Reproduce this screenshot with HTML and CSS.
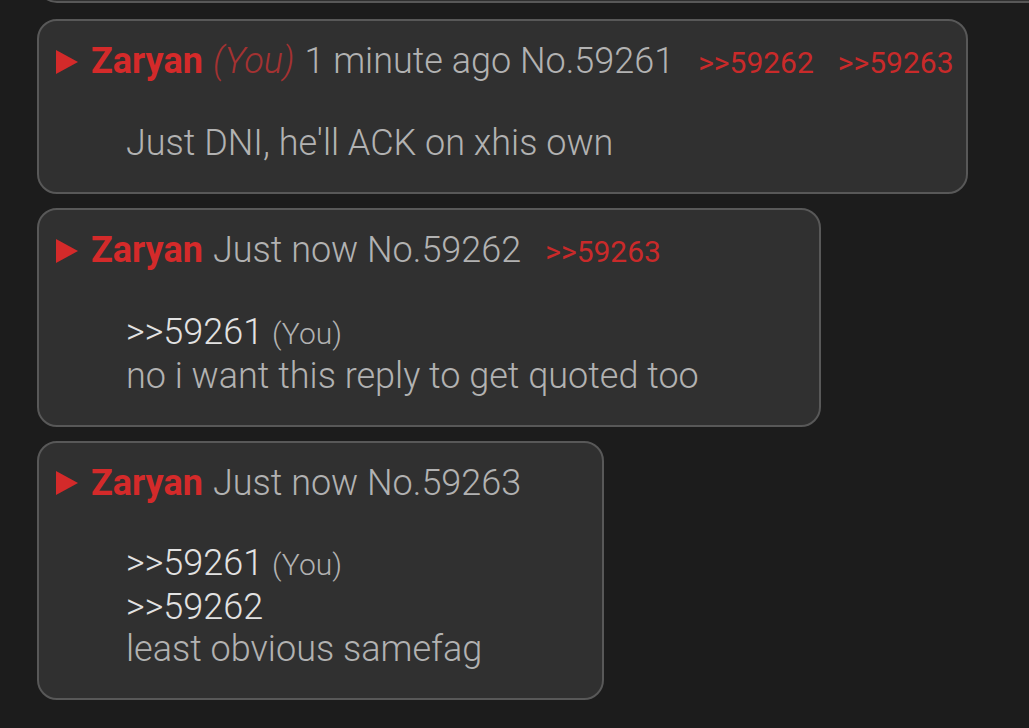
FILE: index.html
```html
<!DOCTYPE html>
<html lang="en">
<head>
    <meta charset="UTF-8">
    <meta name="viewport" content="width=device-width, initial-scale=1.0">
    <title>Thread</title>
    <link rel="stylesheet" href="styles.css">
</head>
<body>
    <div class="thread">
        <div class="post post-prev"></div>

        <div class="post">
            <div class="post-head">
                <svg class="arrow" width="22" height="24" viewBox="0 0 22 24"><polygon points="0,0 22,12 0,24" fill="#d42a2a"/></svg>
                <span class="name">Zaryan</span>
                <span class="you">(You)</span>
                <span class="meta">1 minute ago No.59261</span>
                <span class="backlinks">
                    <a class="backlink">&gt;&gt;59262</a>
                    <a class="backlink">&gt;&gt;59263</a>
                </span>
            </div>
            <div class="post-body">
                <div class="line">Just DNI, he'll ACK on xhis own</div>
            </div>
        </div>

        <div class="post">
            <div class="post-head">
                <svg class="arrow" width="22" height="24" viewBox="0 0 22 24"><polygon points="0,0 22,12 0,24" fill="#d42a2a"/></svg>
                <span class="name">Zaryan</span>
                <span class="meta">Just now No.59262</span>
                <span class="backlinks">
                    <a class="backlink">&gt;&gt;59263</a>
                </span>
            </div>
            <div class="post-body">
                <div class="line"><span class="quote">&gt;&gt;59261</span> <span class="quote-you">(You)</span></div>
                <div class="line">no i want this reply to get quoted too</div>
            </div>
        </div>

        <div class="post">
            <div class="post-head">
                <svg class="arrow" width="22" height="24" viewBox="0 0 22 24"><polygon points="0,0 22,12 0,24" fill="#d42a2a"/></svg>
                <span class="name">Zaryan</span>
                <span class="meta">Just now No.59263</span>
            </div>
            <div class="post-body">
                <div class="line"><span class="quote">&gt;&gt;59261</span> <span class="quote-you">(You)</span></div>
                <div class="line"><span class="quote">&gt;&gt;59262</span></div>
                <div class="line">least obvious samefag</div>
            </div>
        </div>
    </div>
</body>
</html>
```

FILE: styles.css
```css
body {
    margin: 0;
    background: #1c1c1c;
    font-family: Roboto, "Noto Sans", sans-serif;
    font-weight: 300;
    color: #b2b2b2;
    overflow: hidden;
}
.thread {
    padding-left: 37px;
    display: flex;
    flex-direction: column;
    align-items: flex-start;
}
.post {
    background: #303030;
    border: 2px solid #585858;
    border-radius: 20px;
    padding: 19px 12px 28px 17px;
    margin-bottom: 14px;
    box-sizing: border-box;
}
.post-prev {
    align-self: stretch;
    height: 40px;
    margin-top: -37px;
    margin-bottom: 16px;
    margin-right: -40px;
    padding: 0;
}
.post-head {
    display: flex;
    align-items: baseline;
    font-size: 36px;
    line-height: 42px;
    white-space: nowrap;
}
.arrow {
    align-self: center;
    margin-right: 13px;
}
.name {
    color: #d42a2a;
    font-weight: 700;
    margin-right: 10px;
}
.you {
    color: #a43232;
    font-style: italic;
    margin-right: 10px;
}
.meta {
    color: #b2b2b2;
}
.backlinks {
    margin-left: 24px;
    font-size: 30px;
    display: flex;
    gap: 24px;
}
.backlink {
    color: #c92a2a;
    font-weight: 400;
}
.post-body {
    margin: 38px 108px 0 70px;
    font-size: 36px;
    line-height: 42px;
    white-space: nowrap;
}
.quote {
    color: #e2e2e2;
}
.quote-you {
    font-size: 30px;
    color: #b2b2b2;
}
```
